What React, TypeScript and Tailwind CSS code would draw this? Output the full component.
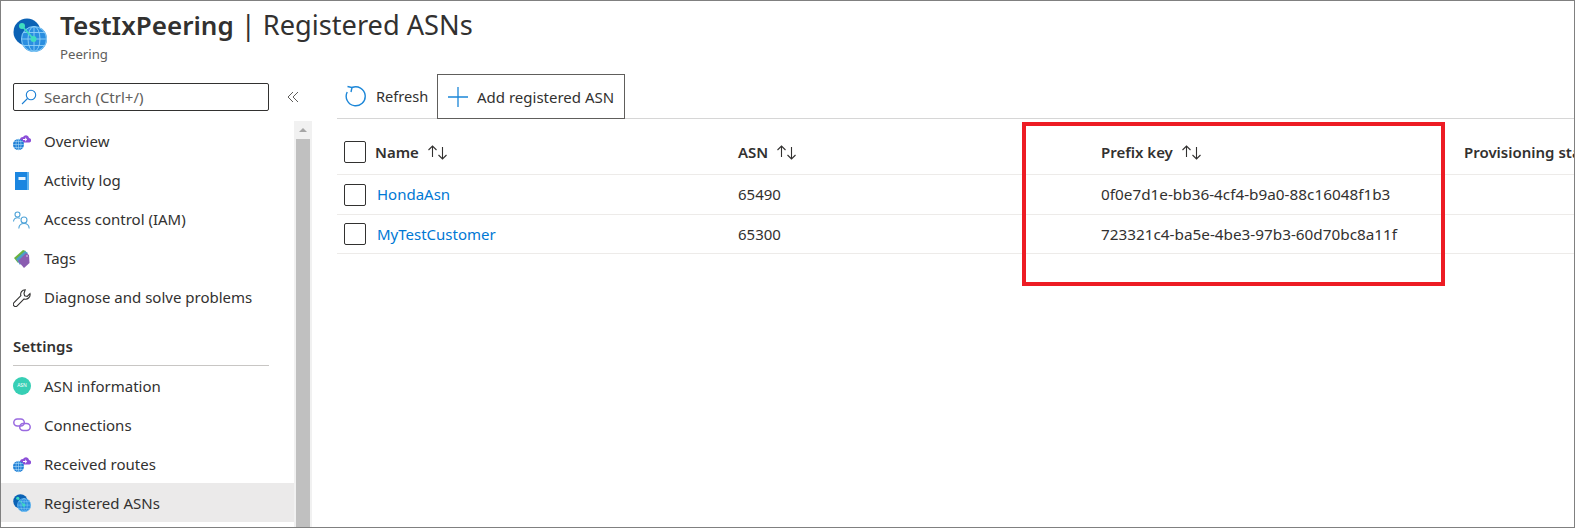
import React from "react";

const PeeringIcon = ({ size }: { size: number }) => (
  <svg width={size} height={size} viewBox="0 0 34 34">
    <circle cx="14" cy="14" r="13.5" fill="#0b62b5" />
    <circle cx="21" cy="21" r="13" fill="#2a8ee0" />
    <g fill="none" stroke="#8fd0f7" strokeWidth="0.9">
      <circle cx="21" cy="21" r="12.5" />
      <ellipse cx="21" cy="21" rx="6" ry="12.5" />
      <path d="M21 8.5v25M8.5 21h25M10.5 14.5h21M10.5 27.5h21" />
    </g>
    <path d="M9 8l11.500 13" stroke="#3fdcc0" strokeWidth="1.800" />
    <circle cx="9" cy="8" r="3" fill="#3fdcc0" />
    <circle cx="20.500" cy="21" r="3" fill="#3fdcc0" />
  </svg>
);

const GlobeCloud = () => (
  <svg width="18" height="18" viewBox="0 0 18 18">
    <path d="M7 7.500a3.200 3.200 0 0 1 3-3.500 3.800 3.800 0 0 1 4-1.500c1.200.4 1.800 1.300 2 2.500a2.300 2.300 0 0 1 .5 4.500H8z" fill="#8c4fd8" />
    <path d="M10 6.500h3.500M12 4.800l1.800 1.700L12 8.200" stroke="#fff" strokeWidth="1" fill="none" />
    <circle cx="5.500" cy="11.500" r="5.500" fill="#1f7fd6" />
    <g fill="none" stroke="#a9d8f7" strokeWidth="0.6">
      <ellipse cx="5.500" cy="11.500" rx="2.500" ry="5.500" />
      <path d="M0 11.500h11M1 8.500h9M1 14.500h9M5.500 6v11" />
    </g>
  </svg>
);

const BookIcon = () => (
  <svg width="18" height="20" viewBox="0 0 18 20">
    <rect x="2" y="1" width="14" height="18" fill="#1b86e0" />
    <rect x="14" y="1" width="2" height="18" fill="#5fb4f0" />
    <rect x="5.500" y="6" width="7" height="3" fill="#e8f4fd" />
  </svg>
);

const PeopleIcon = () => (
  <svg width="18" height="18" viewBox="0 0 18 18" fill="none" stroke="#4fa3d8" strokeWidth="1.100">
    <circle cx="4.500" cy="3.500" r="2.500" />
    <path d="M0.500 10.500c.3-2.500 1.800-3.800 4-3.800 1 0 1.800.2 2.400.7" />
    <circle cx="11" cy="9" r="3" />
    <path d="M5.800 17.500c.2-3 2.300-5 5.200-5s5 2 5.200 5" />
  </svg>
);

const TagIcon = () => (
  <svg width="18" height="20" viewBox="0 0 18 20">
    <path d="M1 9l9-8 3 1-8 12z" fill="#6cb33f" />
    <path d="M3 10l9-8 3 2-8 12z" fill="#4aa0c8" />
    <path d="M5 12l8-8 3 2 .5 8-5.500 5z" fill="#8a5cb0" />
    <circle cx="14" cy="7" r="0.800" fill="#e8dff0" />
  </svg>
);

const WrenchIcon = () => (
  <svg width="18" height="18" viewBox="0 0 18 18" fill="none" stroke="#323130" strokeWidth="1.100">
    <path d="M12.200.800a4.500 4.500 0 0 0-4.300 5.900L1 13.600a2.200 2.200 0 0 0 3.200 3.200l6.900-6.900a4.500 4.500 0 0 0 5.900-5.200l-2.800 2.800-2.600-.6-.6-2.700z" />
  </svg>
);

const AsnIcon = () => (
  <div className="flex h-[18px] w-[18px] items-center justify-center rounded-full bg-[#37cfb5] text-[5px] text-white">ASN</div>
);

const ChainIcon = () => (
  <svg width="18" height="14" viewBox="0 0 18 14" fill="none" stroke="#9a6ae0" strokeWidth="1.500">
    <rect x="0.800" y="1" width="10.500" height="7" rx="3.500" />
    <rect x="6.700" y="5.500" width="10.500" height="7" rx="3.500" />
  </svg>
);

const SortIcon = () => (
  <svg width="21" height="16" viewBox="0 0 21 16" fill="none" stroke="#323130" strokeWidth="1.100">
    <path d="M5.500 13V2M1.500 6l4-4 4 4" />
    <path d="M15.500 3v12M11.500 11l4 4 4-4" />
  </svg>
);

const Box = () => <div className="h-[22px] w-[22px] rounded-[2px] border border-[#323130] bg-white" />;

const NavItem = ({ icon, label, active, low }: { icon: React.ReactNode; label: string; active?: boolean; low?: boolean }) => (
  <div className={`flex h-[39px] items-center ${active ? "bg-[#ebeaea]" : ""}`}>
    <div className="flex w-[43px] justify-start pl-[12px]">{icon}</div>
    <span className={low ? "pt-[2px]" : ""}>{label}</span>
  </div>
);

const Header = ({ label }: { label: string }) => (
  <div className="flex items-center font-semibold">
    <span>{label}</span>
    <span className="ml-[8px] flex"><SortIcon /></span>
  </div>
);

const Row = ({ name, asn, prefix, tall }: { name: string; asn: string; prefix: string; tall?: boolean }) => (
  <div className={`grid grid-cols-[38px_363px_363px_1fr] items-center border-b border-[#edebe9] ${tall ? "h-[40px]" : "h-[39px]"}`}>
    <div className="pl-[7px]"><Box /></div>
    <a className="pl-[2px] text-[#0078d4]">{name}</a>
    <div>{asn}</div>
    <div className="text-[15.3px]">{prefix}</div>
  </div>
);

export default function App() {
  return (
    <div className="relative flex h-[528px] w-[1575px] flex-col overflow-hidden border border-[#808080] bg-white text-[15px] text-[#323130] [font-family:'Noto_Sans',sans-serif]">
      <header className="flex h-[73px] shrink-0 items-start pl-[12px]">
        <div className="mt-[17px]"><PeeringIcon size={34} /></div>
        <div className="ml-[13px] mt-[5px]">
          <div className="text-[27.2px] leading-[38px]"><span className="text-[26px] font-semibold">TestIxPeering</span> | Registered ASNs</div>
          <div className="mt-[1px] text-[13.2px] leading-[18px] text-[#605e5c]">Peering</div>
        </div>
      </header>
      <div className="flex min-h-0 flex-1">
        <aside className="flex w-[311px] shrink-0 flex-col">
          <div className="flex h-[47px] shrink-0 items-start pl-[12px] pt-[9px]">
            <div className="flex h-[28px] w-[256px] items-center rounded-[2px] border border-[#323130] pl-[7px] text-[#605e5c]">
              <svg width="16" height="16" viewBox="0 0 16 16" fill="none" stroke="#1b7fd4" strokeWidth="1.100">
                <circle cx="10" cy="6" r="4.700" />
                <path d="M6.500 9.500L1 15" />
              </svg>
              <span className="ml-[7px]">Search (Ctrl+/)</span>
            </div>
            <svg className="ml-[18px] mt-[8px]" width="12" height="12" viewBox="0 0 12 12" fill="none" stroke="#605e5c" strokeWidth="1">
              <path d="M6 1L1 6l5 5M11 1L6 6l5 5" />
            </svg>
          </div>
          <div className="flex min-h-0 flex-1 overflow-hidden">
            <nav className="w-[293px] shrink-0 pt-[1px]">
              <NavItem icon={<GlobeCloud />} label="Overview" />
              <NavItem icon={<BookIcon />} label="Activity log" />
              <NavItem icon={<PeopleIcon />} label="Access control (IAM)" />
              <NavItem icon={<TagIcon />} label="Tags" />
              <NavItem icon={<WrenchIcon />} label="Diagnose and solve problems" />
              <div className="ml-[12px] flex h-[49px] w-[256px] items-end border-b border-[#c8c6c4] pb-[8px] font-semibold">Settings</div>
              <NavItem icon={<AsnIcon />} label="ASN information" low />
              <NavItem icon={<ChainIcon />} label="Connections" low />
              <NavItem icon={<GlobeCloud />} label="Received routes" low />
              <NavItem icon={<PeeringIcon size={18} />} label="Registered ASNs" active low />
            </nav>
            <div className="flex w-[18px] shrink-0 flex-col bg-[#f1f1f1] pl-[2px] pr-[2px]">
              <div className="flex h-[18px] shrink-0 items-center justify-center">
                <div className="h-0 w-0 border-x-[4px] border-b-[4px] border-x-transparent border-b-[#a6a6a6]" />
              </div>
              <div className="flex-1 bg-[#c0c0c0]" />
            </div>
          </div>
        </aside>
        <main className="ml-[25px] min-w-0 flex-1">
          <div className="flex h-[45px] items-stretch border-b border-[#d6d6d6]">
            <div className="flex w-[100px] items-center pl-[8px]">
              <svg width="22" height="22" viewBox="0 0 22 22" fill="none" stroke="#1b86d8" strokeWidth="1.400">
                <path d="M7 2.500a9.500 9.500 0 1 1-4.800 4.500" />
                <path d="M2.500 1.500L7 2.500 6 7" />
              </svg>
              <span className="ml-[9px] pt-[2px] text-[14.6px]">Refresh</span>
            </div>
            <div className="mb-[-1px] flex w-[188px] items-center border border-[#605e5c] pl-[10px]">
              <svg width="20" height="20" viewBox="0 0 20 20" stroke="#1b86d8" strokeWidth="1.300">
                <path d="M10 0v20M0 10h20" />
              </svg>
              <span className="ml-[9px] pt-[2px]">Add registered ASN</span>
            </div>
          </div>
          <div className="grid h-[56px] grid-cols-[38px_363px_363px_363px_1fr] items-center border-b border-[#edebe9] pt-[11px] whitespace-nowrap">
            <div className="pl-[7px]"><Box /></div>
            <Header label="Name" />
            <Header label="ASN" />
            <Header label="Prefix key" />
            <div className="overflow-hidden font-semibold">Provisioning state</div>
          </div>
          <Row name="HondaAsn" asn="65490" prefix="0f0e7d1e-bb36-4cf4-b9a0-88c16048f1b3" tall />
          <Row name="MyTestCustomer" asn="65300" prefix="723321c4-ba5e-4be3-97b3-60d70bc8a11f" />
        </main>
      </div>
      <div className="pointer-events-none absolute left-[1021px] top-[121px] h-[164px] w-[423px] border-[4px] border-[#ed1c24]" />
    </div>
  );
}
